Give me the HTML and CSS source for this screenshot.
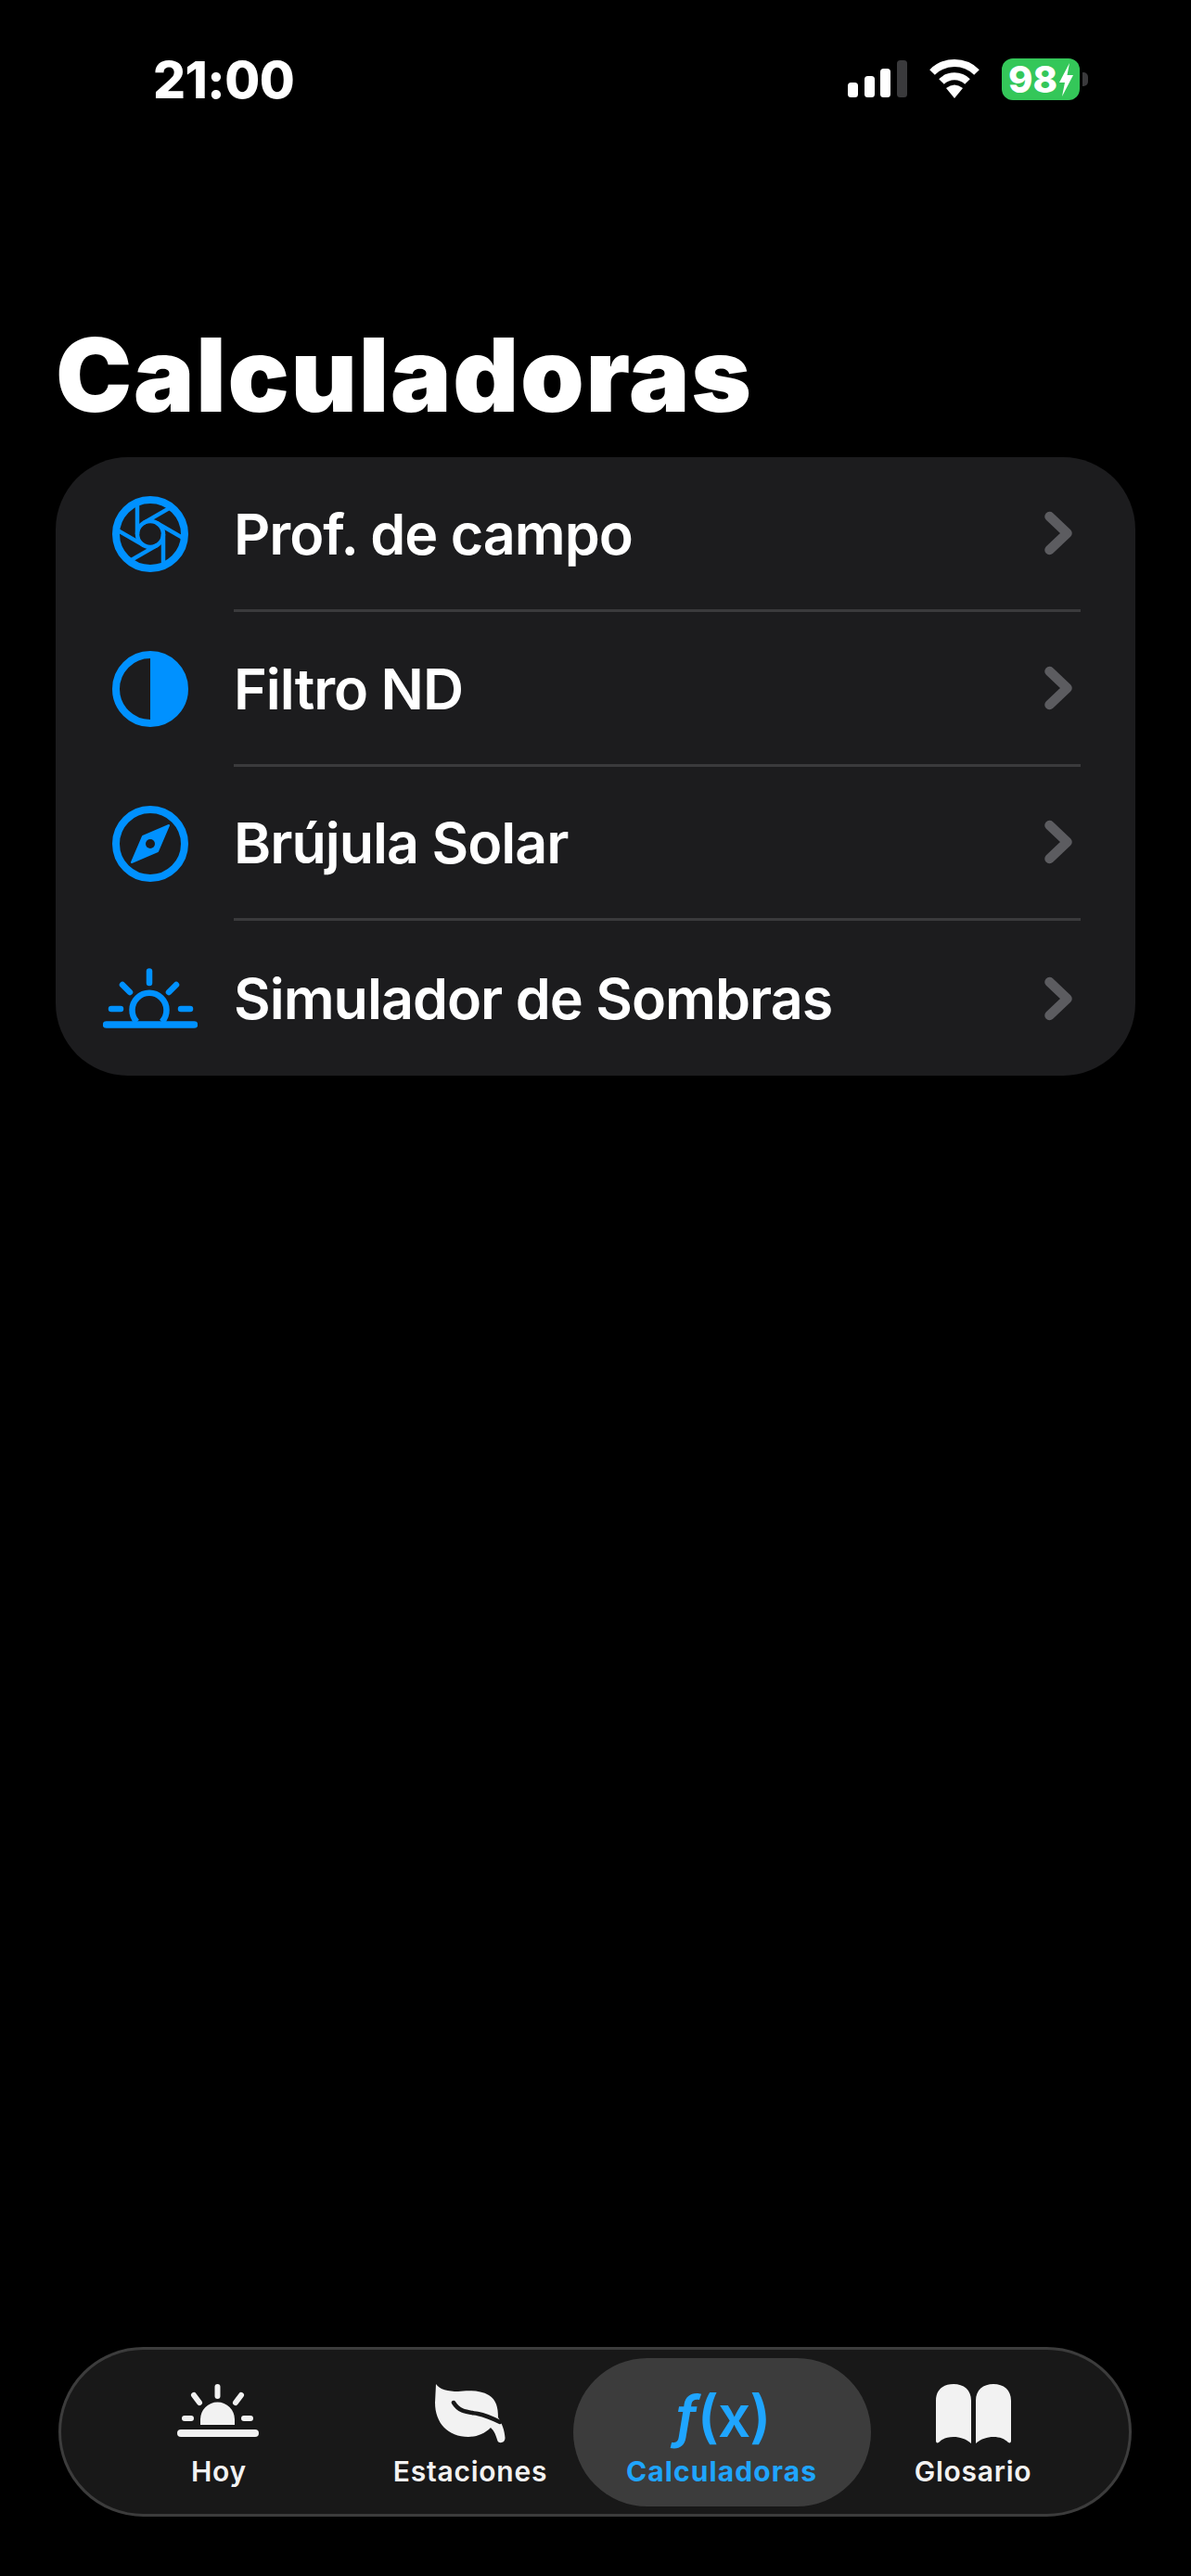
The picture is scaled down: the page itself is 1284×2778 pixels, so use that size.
FILE: index.html
```html
<!DOCTYPE html>
<html lang="es">
<head>
<meta charset="utf-8">
<title>Calculadoras</title>
<link rel="stylesheet" href="styles.css">
</head>
<body>
<div class="page">
  <header class="status">
    <span class="time">21:00</span>
    <div class="status-icons">
      <svg class="signal" width="64" height="41" viewBox="0 0 64 41"><rect x="0" y="24" width="11" height="16" rx="3.5" fill="#fff"/><rect x="18" y="17" width="11" height="23" rx="3.5" fill="#fff"/><rect x="35" y="9" width="11" height="31" rx="3.5" fill="#fff"/><rect x="53" y="0" width="11" height="40" rx="3.5" fill="#3a3a3c"/></svg>
      <svg class="wifi" width="58" height="42" viewBox="0 0 58 42"><path d="M5 14A34 34 0 0 1 53 14" fill="none" stroke="#fff" stroke-width="8"/><path d="M15 24A20 20 0 0 1 43 24" fill="none" stroke="#fff" stroke-width="8"/><path d="M29 42L20 31Q29 24 38 31Z" fill="#fff"/></svg>
      <div class="battery"><span class="battery-pct">98</span><svg width="15" height="36" viewBox="0 0 15 36"><path d="M11 0L0 21H6L3 36L15 13H8.500Z" fill="#fff"/></svg></div>
      <span class="battery-cap"></span>
    </div>
  </header>

  <h1 class="title">Calculadoras</h1>

  <main class="card">
    <a class="row">
      <span class="row-icon">
        <svg width="82" height="82" viewBox="-41 -41 82 82" fill="none" stroke="#0091ff"><circle r="37" stroke-width="8"/><circle r="14" stroke-width="4.500"/><g stroke-width="4.500"><path d="M-14 -33V0"/><path d="M-14 -33V0" transform="rotate(60)"/><path d="M-14 -33V0" transform="rotate(120)"/><path d="M-14 -33V0" transform="rotate(180)"/><path d="M-14 -33V0" transform="rotate(240)"/><path d="M-14 -33V0" transform="rotate(300)"/></g></svg>
      </span>
      <span class="row-body"><span class="row-label">Prof. de campo</span><svg class="chevron" width="30" height="48" viewBox="0 0 30 48"><path d="M5.500 6L24.500 24L5.500 42" fill="none" stroke="#5c5c60" stroke-width="10.500" stroke-linecap="round" stroke-linejoin="round"/></svg></span>
    </a>
    <a class="row">
      <span class="row-icon">
        <svg width="82" height="82" viewBox="-41 -41 82 82"><circle r="37" fill="none" stroke="#0091ff" stroke-width="8"/><path d="M0 -37A37 37 0 0 1 0 37Z" fill="#0091ff"/></svg>
      </span>
      <span class="row-body"><span class="row-label">Filtro ND</span><svg class="chevron" width="30" height="48" viewBox="0 0 30 48"><path d="M5.500 6L24.500 24L5.500 42" fill="none" stroke="#5c5c60" stroke-width="10.500" stroke-linecap="round" stroke-linejoin="round"/></svg></span>
    </a>
    <a class="row">
      <span class="row-icon">
        <svg width="82" height="82" viewBox="-41 -41 82 82"><circle r="37" fill="none" stroke="#0091ff" stroke-width="8"/><path d="M20 -20L8 8L-20 20L-8 -8Z" fill="#0091ff" stroke="#0091ff" stroke-width="2" stroke-linejoin="round"/><circle r="5" fill="#1c1c1e"/></svg>
      </span>
      <span class="row-body"><span class="row-label">Brújula Solar</span><svg class="chevron" width="30" height="48" viewBox="0 0 30 48"><path d="M5.500 6L24.500 24L5.500 42" fill="none" stroke="#5c5c60" stroke-width="10.500" stroke-linecap="round" stroke-linejoin="round"/></svg></span>
    </a>
    <a class="row row-last">
      <span class="row-icon">
        <svg width="102" height="65" viewBox="0 0 102 65" fill="none" stroke="#0091ff" stroke-width="6.500" stroke-linecap="round"><path d="M3.500 61H98.500" stroke-width="7.500"/><path d="M50 3.500V16"/><path d="M21 18L29 26"/><path d="M79 18L71 26"/><path d="M9 44H19"/><path d="M84 44H94"/><path d="M36.500 58A18.500 18.500 0 1 1 63.500 58" stroke-linecap="butt"/></svg>
      </span>
      <span class="row-body"><span class="row-label">Simulador de Sombras</span><svg class="chevron" width="30" height="48" viewBox="0 0 30 48"><path d="M5.500 6L24.500 24L5.500 42" fill="none" stroke="#5c5c60" stroke-width="10.500" stroke-linecap="round" stroke-linejoin="round"/></svg></span>
    </a>
  </main>

  <nav class="tabbar">
    <a class="tab">
      <span class="tab-icon tab-icon-sun">
        <svg width="88" height="57" viewBox="0 0 88 57"><rect x="0" y="49" width="88" height="8" rx="4" fill="#f2f2f2"/><path d="M25 44V38A18.500 18.500 0 0 1 62 38V44Z" fill="#f2f2f2"/><g stroke="#f2f2f2" stroke-width="6" stroke-linecap="round"><path d="M43.500 3V13"/><path d="M18 12L24 20"/><path d="M69 12L63 20"/><path d="M8 37H15"/><path d="M72 37H79"/></g></svg>
      </span>
      <span class="tab-label">Hoy</span>
    </a>
    <a class="tab">
      <span class="tab-icon">
        <svg width="76" height="65" viewBox="0 0 76 65"><path d="M1 0C5 6 14 8 25 8C34 7 48 6 58 12C66 17 68 25 68 36C72 42 75 50 75.500 58C75.500 64 68 65 67 60C65 53 63 50 60 47C53 54 44 57 36 57C14 57 0 42 0 20Z" fill="#f2f2f2"/><path d="M20 20C26 30 34 30 46 32C56 34 62 37 70 41" fill="none" stroke="#181818" stroke-width="4.500" stroke-linecap="round"/></svg>
      </span>
      <span class="tab-label">Estaciones</span>
    </a>
    <a class="tab tab-active">
      <span class="tab-icon tab-fx"><i>ƒ</i>(x)</span>
      <span class="tab-label">Calculadoras</span>
    </a>
    <a class="tab">
      <span class="tab-icon">
        <svg width="81" height="65" viewBox="0 0 81 65" fill="#f2f2f2"><path d="M0 18C0 6 8 0 19 0C30 0 38 6 38 18V64C32 59 26 57 19 57C12 57 7 59 3 63C1 64 0 63 0 61Z"/><path d="M81 18C81 6 73 0 62 0C51 0 43 6 43 18V64C49 59 55 57 62 57C69 57 74 59 78 63C80 64 81 63 81 61Z"/></svg>
      </span>
      <span class="tab-label">Glosario</span>
    </a>
  </nav>
</div>
</body>
</html>
```
FILE: styles.css
```css
* { box-sizing: border-box; }
html, body { margin: 0; background: #000; }
body { font-family: Inter, "Noto Sans", sans-serif; color: #fff; }
.page {
  height: 2778px;
  display: flex;
  flex-direction: column;
  padding: 63px 0 64px;
}
.status {
  display: flex;
  align-items: center;
  justify-content: space-between;
  height: 45px;
  padding: 0 111px 0 165px;
}
.time { font-size: 55px; font-weight: 800; line-height: 48px; letter-spacing: -0.5px; }
.status-icons { display: flex; align-items: flex-end; }
.signal { margin-right: 22px; margin-bottom: 2px; display: block; }
.wifi { margin-right: 22px; margin-bottom: 2px; display: block; }
.battery {
  width: 84px;
  height: 45px;
  border-radius: 12px;
  background: #34c759;
  display: flex;
  align-items: center;
  justify-content: center;
  gap: 2px;
}
.battery-pct { font-size: 40px; font-weight: 800; line-height: 1; }
.battery-cap {
  width: 6px;
  height: 15px;
  margin: 0 0 15px 3px;
  border-radius: 0 5px 5px 0;
  background: #3a3a3c;
}
.title {
  margin: 236px 0 0 60px;
  height: 149px;
  font-size: 110px;
  font-weight: 900;
  line-height: 120px;
  letter-spacing: 1.7px;
}
.card {
  margin: 0 60px;
  height: 667px;
  border-radius: 78px;
  background: #1c1c1e;
  display: grid;
  grid-template-rows: repeat(4, 1fr);
}
.row { display: flex; align-items: stretch; }
.row-icon {
  width: 180px;
  margin-left: 12px;
  display: flex;
  align-items: center;
  justify-content: center;
}
.row-icon svg, .tab-icon svg { display: block; }
.row-body {
  flex: 1;
  margin-right: 59px;
  display: flex;
  align-items: center;
  justify-content: space-between;
  padding-right: 9px;
  border-bottom: 3px solid #3a3a3c;
}
.row-last .row-body { border-bottom: none; }
.row-label { font-size: 61px; font-weight: 560; letter-spacing: -1px; padding-top: 2px; }
.row-last .row-label { padding-top: 0; }
.tabbar {
  margin: auto 64px 0 63px;
  height: 183px;
  border: 3px solid #3c3c3c;
  border-radius: 92px;
  background: #181818;
  display: grid;
  grid-template-columns: repeat(4, 271px);
  justify-content: center;
  padding-left: 2px;
}
.tab {
  position: relative;
  display: flex;
  flex-direction: column;
  align-items: center;
  padding-top: 37px;
  color: #f2f2f2;
}
.tab-icon {
  position: relative;
  height: 70px;
  display: flex;
  align-items: flex-start;
  justify-content: center;
}
.tab-icon-sun { padding-right: 3px; }
.tab-label {
  position: relative;
  font-size: 30px;
  font-weight: 600;
  line-height: 36px;
  margin-top: 6px;
  letter-spacing: 0.75px;
}
.tab-active { color: #1fa5ff; }
.tab-active .tab-label { font-weight: 700; letter-spacing: 1.1px; }
.tab-active::before {
  content: "";
  position: absolute;
  top: 9px;
  left: -25px;
  width: 321px;
  height: 160px;
  border-radius: 80px;
  background: #3c3c3c;
}
.tab-fx {
  font-size: 62px;
  font-weight: 600;
  line-height: 70px;
  letter-spacing: -1px;
}
.tab-fx i { font-style: italic; }
```
